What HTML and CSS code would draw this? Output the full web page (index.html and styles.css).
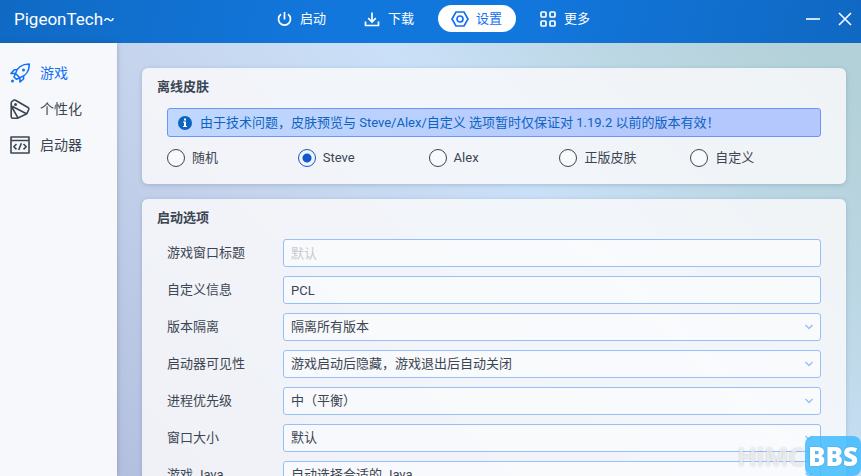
FILE: index.html
```html
<!DOCTYPE html>
<html lang="zh-CN">
<head>
    <meta charset="UTF-8">
    <meta name="viewport" content="width=device-width, initial-scale=1.0">
    <title>PigeonTech~</title>
    <link rel="stylesheet" href="styles.css">
</head>
<body>
    <header class="header">
        <h1 class="title">PigeonTech~</h1>
        <nav class="tabs">
            <button class="tab">
                <svg class="tab-icon" viewBox="0 0 18 18"><path d="M6 4.300a6 6 0 1 0 7 0M9.500 2v7.500"/></svg>
                启动
            </button>
            <button class="tab">
                <svg class="tab-icon" viewBox="0 0 18 18"><path d="M9 2.500v9M5.200 8.200L9 12l3.800-3.800M2.500 11.500v4h13v-4"/></svg>
                下载
            </button>
            <button class="tab active">
                <svg class="tab-icon" viewBox="0 0 18 18"><path d="M5 2h8l4 7-4 7H5L1 9z"/><circle cx="9" cy="9" r="3"/></svg>
                设置
            </button>
            <button class="tab">
                <svg class="tab-icon" viewBox="0 0 18 18"><rect x="2" y="2" width="5" height="5" rx="1"/><rect x="11" y="2" width="5" height="5" rx="1"/><rect x="2" y="11" width="5" height="5" rx="1"/><rect x="11" y="11" width="5" height="5" rx="1"/></svg>
                更多
            </button>
        </nav>
        <div class="window-buttons">
            <button class="window-button" aria-label="最小化"><svg viewBox="0 0 14 14"><path d="M0 7h14"/></svg></button>
            <button class="window-button" aria-label="关闭"><svg viewBox="0 0 14 14"><path d="M1 1l12 12M13 1L1 13"/></svg></button>
        </div>
    </header>

    <div class="layout">
        <aside class="sidebar">
            <button class="side-item active">
                <svg class="side-icon" viewBox="0 0 20 20"><path d="M5.500 10.500C7 5 12 1 19.200 1C19.500 8 15.500 13 9.800 14.800z"/><path d="M7.500 6.500L4 7L1 10.500l4.500 0M13.500 12.500l0 3.500l-3.500 3l-.2-4.200M5.500 10.500l-1.500 3.500l2.300 2.300l3.500-1.500"/><circle class="dot" cx="13.500" cy="7" r="1.500"/><circle class="dot" cx="2.500" cy="18" r="1.500"/></svg>
                游戏
            </button>
            <button class="side-item">
                <svg class="side-icon" viewBox="0 0 20 20"><path d="M1.200 17.500V4Q1.200 3 2 2.500L3.500 1.300Q4.500.7 5.500 1.300L18 8.500Q19.300 9.300 18.700 10.500L17.200 14Q17 14.700 16.300 15L8.500 18.700Q7.500 19.200 6.500 19.200H2.800Q1.200 19.200 1.200 17.500zM1.200 7L8 18.800M1.500 7L16.500 14.800"/><circle class="dot" cx="5.500" cy="5.500" r="1.500"/></svg>
                个性化
            </button>
            <button class="side-item">
                <svg class="side-icon" viewBox="0 0 20 20"><path d="M1 2h18v16H1zM1 5.500h18M6.500 9L3.800 11.700l2.700 2.700M13.500 9l2.700 2.700-2.700 2.700M11.300 8.300L8.700 15"/></svg>
                启动器
            </button>
        </aside>

        <main class="content">
            <section class="card">
                <h2>离线皮肤</h2>
                <div class="card-body">
                    <p class="notice">
                        <svg class="notice-icon" viewBox="0 0 14 14"><circle cx="7" cy="7" r="7"/><path d="M6 2.500h2v2H6zM5 5.500h3V10h1v1H5v-1h1V6.500H5z"/></svg>
                        由于技术问题，皮肤预览与 Steve/Alex/自定义 选项暂时仅保证对 1.19.2 以前的版本有效！
                    </p>
                    <div class="radio-group">
                        <label class="radio"><input type="radio" name="skin">随机</label>
                        <label class="radio"><input type="radio" name="skin" checked>Steve</label>
                        <label class="radio"><input type="radio" name="skin">Alex</label>
                        <label class="radio"><input type="radio" name="skin">正版皮肤</label>
                        <label class="radio"><input type="radio" name="skin">自定义</label>
                    </div>
                </div>
            </section>

            <section class="card">
                <h2>启动选项</h2>
                <div class="card-body form">
                    <label for="windowTitle">游戏窗口标题</label>
                    <input class="field" type="text" id="windowTitle" placeholder="默认">

                    <label for="customInfo">自定义信息</label>
                    <input class="field" type="text" id="customInfo" value="PCL">

                    <label for="isolation">版本隔离</label>
                    <select class="field" id="isolation">
                        <option>隔离所有版本</option>
                    </select>

                    <label for="visibility">启动器可见性</label>
                    <select class="field" id="visibility">
                        <option>游戏启动后隐藏，游戏退出后自动关闭</option>
                    </select>

                    <label for="priority">进程优先级</label>
                    <select class="field" id="priority">
                        <option>中（平衡）</option>
                    </select>

                    <label for="windowSize">窗口大小</label>
                    <select class="field" id="windowSize">
                        <option>默认</option>
                    </select>

                    <label for="java">游戏 Java</label>
                    <select class="field" id="java">
                        <option>自动选择合适的 Java</option>
                    </select>
                </div>
            </section>
        </main>
    </div>

    <div class="watermark"><span>HiMC</span><b>BBS</b></div>
</body>
</html>
```

FILE: styles.css
```css
:root {
    --primary-color: #1370f3;
    --text-color: #3c4552;
    --border-color: #96c0f9;
}

* {
    box-sizing: border-box;
    margin: 0;
    padding: 0;
}

body {
    display: flex;
    flex-direction: column;
    height: 100vh;
    overflow: hidden;
    font-family: Roboto, "Noto Sans CJK SC", sans-serif;
    font-size: 13px;
    line-height: 20px;
    color: var(--text-color);
}

button, input, select {
    font: inherit;
    color: inherit;
}

button {
    background: none;
    border: none;
    cursor: pointer;
}

svg {
    fill: none;
    stroke: currentColor;
}

/* 标题栏 */
.header {
    display: grid;
    grid-template-columns: 1fr auto 1fr;
    flex: none;
    height: 43px;
    padding: 5px 9px 11px 14px;
    align-items: center;
    color: white;
    background: linear-gradient(100deg, #106ac4, #1277dd 40%, #1277dd 60%, #1068c2);
}

.title {
    font-size: 17px;
    font-weight: 400;
}

.tabs {
    display: flex;
    gap: 10px;
}

.tab {
    display: flex;
    align-items: center;
    gap: 7px;
    height: 27px;
    padding: 0 14px 0 13px;
    border-radius: 14px;
}

.tab.active {
    color: var(--primary-color);
    background-color: white;
}

.tab-icon {
    width: 18px;
    height: 18px;
    stroke-width: 1.7;
}

.window-buttons {
    display: flex;
    justify-content: flex-end;
    gap: 18px;
}

.window-button {
    width: 14px;
    height: 14px;
}

.window-button svg {
    display: block;
    stroke-width: 1.6;
}

.layout {
    display: flex;
    flex: 1;
    min-height: 0;
    background: linear-gradient(45deg, #b4c0e0 10%, #bccae6 25%, #c6d4ed 42%, #cae0f8 63%, #bcd7e4 80%, #b3d1d8 96%);
}

/* 侧边栏 */
.sidebar {
    flex: none;
    width: 117px;
    padding-top: 12px;
    background-color: #f6f8fc;
    box-shadow: 0 0 5px rgba(52, 61, 74, 0.3);
}

.side-item {
    display: flex;
    align-items: center;
    gap: 10px;
    width: 100%;
    height: 36px;
    padding-left: 10px;
    font-size: 14px;
}

.side-item.active {
    color: var(--primary-color);
}

.side-icon {
    width: 20px;
    height: 20px;
    stroke-width: 1.6;
    stroke-linejoin: round;
}

.dot {
    fill: currentColor;
    stroke: none;
}

/* 内容 */
.content {
    display: flex;
    flex: 1;
    flex-direction: column;
    gap: 15px;
    min-width: 0;
    padding: 25px 15px 0 25px;
    overflow: hidden;
}

.card {
    flex: none;
    padding: 9px 15px 16px;
    background-color: rgba(249, 249, 250, 0.85);
    border-radius: 6px;
    box-shadow: 0 1px 4px rgba(52, 90, 130, 0.25);
}

.card h2 {
    font-size: 13px;
    font-weight: 700;
}

.card-body {
    padding: 11px 10px 0;
}

.notice {
    display: flex;
    align-items: center;
    gap: 8px;
    height: 29px;
    padding: 0 10px;
    color: #0d64c0;
    background: linear-gradient(90deg, #c0d8fe, #b4c8fe 75%);
    border: 1px solid #6f93fb;
    border-radius: 3px;
}

.notice-icon {
    flex: none;
    width: 14px;
    height: 14px;
    stroke: none;
    fill: #0d64c0;
}

.notice-icon path {
    fill: white;
}

.radio-group {
    display: grid;
    grid-template-columns: repeat(5, 1fr);
    margin-top: 11px;
}

.radio {
    display: flex;
    align-items: center;
    gap: 7px;
}

.radio input {
    appearance: none;
    width: 18px;
    height: 18px;
    border: 1px solid var(--text-color);
    border-radius: 50%;
    background-color: rgba(255, 255, 255, 0.5);
}

.radio input:checked {
    border-color: #1059cd;
    background: radial-gradient(circle, #1059cd 4px, transparent 5px);
}

.form {
    display: grid;
    grid-template-columns: 116px 1fr;
    gap: 9px 0;
    align-items: center;
}

.field {
    width: 100%;
    height: 28px;
    padding: 0 7px;
    background-color: rgba(255, 255, 255, 0.5);
    border: 1px solid var(--border-color);
    border-radius: 3px;
}

.field::placeholder {
    color: #c6cad0;
}

select.field {
    appearance: none;
    background-image: url("data:image/svg+xml,%3Csvg xmlns='http://www.w3.org/2000/svg' width='8' height='6' fill='none' stroke='%2396c0f9' stroke-width='1.500'%3E%3Cpath d='M.5 1L4 4.500 7.500 1'/%3E%3C/svg%3E");
    background-repeat: no-repeat;
    background-position: right 7px center;
}

.watermark {
    position: fixed;
    right: 0;
    bottom: 0;
    display: flex;
    align-items: center;
    font-family: "Noto Sans", sans-serif;
    font-size: 26px;
    font-weight: 600;
    line-height: 40px;
    color: white;
    text-shadow: 0 0 2px rgba(60, 60, 60, 0.3);
}

.watermark span {
    color: rgba(250, 250, 250, 0.7);
}

.watermark b {
    padding: 0 3px;
    background-color: rgba(63, 187, 255, 0.85);
    border-radius: 8px;
}
```
